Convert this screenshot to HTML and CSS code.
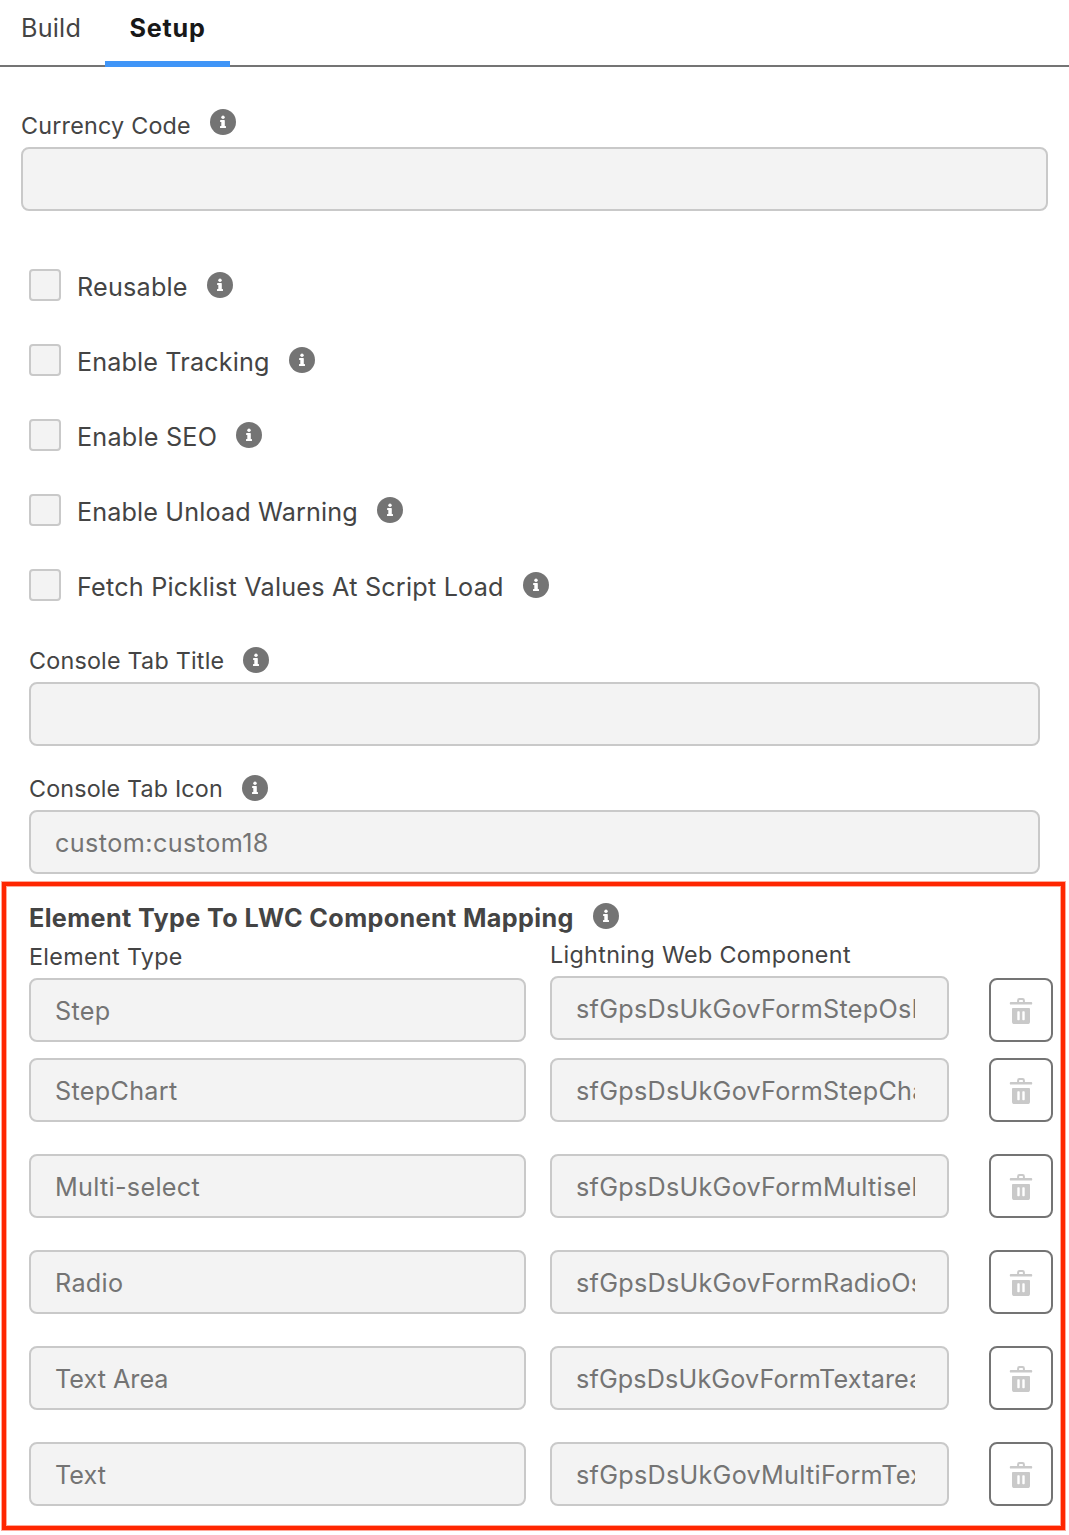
FILE: index.html
```html
<!DOCTYPE html>
<html lang="en">
<head>
<meta charset="utf-8">
<title>Setup</title>
<link rel="stylesheet" href="styles.css">
</head>
<body>
<svg class="sprite" aria-hidden="true">
  <symbol id="info" viewBox="0 0 26 26">
    <circle cx="13" cy="13" r="13" fill="#747474"/>
    <circle cx="13" cy="8.2" r="1.7" fill="#fff"/>
    <path fill="#fff" d="M10.7 11h3.5q.6 0 .6.6v5.400h.6q.6 0 .6.6v.8q0 .6-.6.6h-4.800q-.6 0-.6-.6v-.8q0-.6.6-.6h.7v-4h-.6q-.6 0-.6-.6v-.8q0-.6.6-.6z"/>
  </symbol>
  <symbol id="trash" viewBox="0 0 24 28">
    <path fill="#c9c9c9" fill-rule="evenodd" d="M1.8 5.1h6.3V3.4Q8.100 1 10.400 1h3.200q2.300 0 2.300 2.400v1.700h6.300q1 0 1 .9v.7q0 .9-1 .9H1.800q-1 0-1-.9V6q0-.9 1-.9zM10.100 5.100h3.800V3.600q0-.7-.7-.7h-2.400q-.7 0-.7.700zM3.900 11h16.200q.9 0 .9.9v12.500q0 2.600-2.500 2.600h-13Q3 27 3 24.400V11.900q0-.9.900-.9zM9 14.300q-.7 0-.7.7v7.600q0 .7.700.7h1q.7 0 .7-.7V15q0-.7-.7-.7zM14 14.300q-.7 0-.7.700v7.600q0 .7.700.7h1q.7 0 .7-.7V15q0-.7-.7-.7z"/>
  </symbol>
</svg>

<nav class="tabs">
  <a class="tab">Build</a>
  <a class="tab tab-active">Setup</a>
</nav>

<main>
  <div class="field field-wide">
    <label class="label">Currency Code <svg class="info"><use href="#info"/></svg></label>
    <div class="input"></div>
  </div>

  <div class="checks">
    <label class="check"><span class="box"></span><span>Reusable</span><svg class="info"><use href="#info"/></svg></label>
    <label class="check check-snug"><span class="box"></span><span>Enable Tracking</span><svg class="info"><use href="#info"/></svg></label>
    <label class="check"><span class="box"></span><span>Enable SEO</span><svg class="info"><use href="#info"/></svg></label>
    <label class="check check-snug"><span class="box"></span><span>Enable Unload Warning</span><svg class="info"><use href="#info"/></svg></label>
    <label class="check"><span class="box"></span><span>Fetch Picklist Values At Script Load</span><svg class="info"><use href="#info"/></svg></label>
  </div>

  <div class="field">
    <label class="label">Console Tab Title <svg class="info"><use href="#info"/></svg></label>
    <div class="input"></div>
  </div>
  <div class="field">
    <label class="label label-snug">Console Tab Icon <svg class="info"><use href="#info"/></svg></label>
    <div class="input"><span class="value value-icon">custom:custom18</span></div>
  </div>
</main>

<section class="mapping">
  <h2 class="heading">Element Type To LWC Component Mapping <svg class="info"><use href="#info"/></svg></h2>
  <div class="row row-first">
    <div><div class="label col-label">Element Type</div><div class="input"><span class="value">Step</span></div></div>
    <div class="raised"><div class="label col-label">Lightning Web Component</div><div class="input"><span class="value value-component">sfGpsDsUkGovFormStepOsN</span></div></div>
    <button class="delete"><svg class="trash"><use href="#trash"/></svg></button>
  </div>
  <div class="row">
    <div class="input"><span class="value">StepChart</span></div>
    <div class="input"><span class="value value-component">sfGpsDsUkGovFormStepChartOsN</span></div>
    <button class="delete"><svg class="trash"><use href="#trash"/></svg></button>
  </div>
  <div class="row">
    <div class="input"><span class="value">Multi-select</span></div>
    <div class="input"><span class="value value-component">sfGpsDsUkGovFormMultiselectOsN</span></div>
    <button class="delete"><svg class="trash"><use href="#trash"/></svg></button>
  </div>
  <div class="row">
    <div class="input"><span class="value">Radio</span></div>
    <div class="input"><span class="value value-component">sfGpsDsUkGovFormRadioOsN</span></div>
    <button class="delete"><svg class="trash"><use href="#trash"/></svg></button>
  </div>
  <div class="row">
    <div class="input"><span class="value value-tight">Text Area</span></div>
    <div class="input"><span class="value value-text">sfGpsDsUkGovFormTextareaOsN</span></div>
    <button class="delete"><svg class="trash"><use href="#trash"/></svg></button>
  </div>
  <div class="row">
    <div class="input"><span class="value value-tight">Text</span></div>
    <div class="input"><span class="value value-component">sfGpsDsUkGovMultiFormTextOsN</span></div>
    <button class="delete"><svg class="trash"><use href="#trash"/></svg></button>
  </div>
</section>
</body>
</html>
```
FILE: styles.css
```css
* { box-sizing: border-box; }
body {
  margin: 0;
  width: 1069px;
  height: 1535px;
  overflow: hidden;
  background: #fff;
  color: #444;
  font: 25.2px/30px Inter, "Liberation Sans", sans-serif;
  letter-spacing: 0.21px;
}
.sprite { display: none; }
.tabs {
  display: flex;
  height: 67px;
  border-bottom: 2px solid #747474;
}
.tab { width: 105px; height: 67px; padding: 13px 0 0 21px; }
.tab-active {
  width: 125px;
  padding-left: 24.5px;
  border-bottom: 6px solid #4095f7;
  color: #181818;
  font-weight: 700;
  letter-spacing: 0.8px;
}
.info { flex: none; width: 26px; height: 26px; margin-left: 19px; }
.field { margin: 0 29px; height: 128px; }
.field-wide { margin: 0 21px; padding-top: 42px; height: 187px; }
.label {
  display: flex;
  align-items: flex-start;
  height: 38px;
  padding-top: 3px;
  font-size: 23.3px;
  letter-spacing: 0.22px;
  line-height: 28px;
}
.label-snug { letter-spacing: 0.16px; }
.field-wide .label { padding-top: 0; line-height: 34px; }
.input {
  height: 64px;
  padding: 0 32px 0 24px;
  border: 2px solid #c9c9c9;
  border-radius: 8px;
  background: #f3f3f3;
  color: #747474;
}
.value {
  display: block;
  overflow: hidden;
  line-height: 62px;
  white-space: nowrap;
  letter-spacing: 0.3px;
}
.value-icon { letter-spacing: 0.42px; }
.value-tight { letter-spacing: 0; }
.value-component { letter-spacing: 0.27px; }
.value-text { letter-spacing: 0.13px; }
.checks { padding: 15px 0 0 29px; height: 390px; }
.check { display: flex; height: 75px; }
.check-snug { letter-spacing: 0.13px; }
.check span { line-height: 36px; }
.box {
  width: 32px;
  height: 32px;
  margin-right: 16px;
  border: 2px solid #c9c9c9;
  border-radius: 4px;
  background: #f3f3f3;
}
.check .info { margin-top: 3px; }
main { height: 815px; }
.mapping {
  width: 1063px;
  height: 648px;
  margin-left: 2px;
  padding: 17px 0 0 23px;
  border: 4px solid #ff2600;
  box-shadow: 0 0 0 1px rgba(255, 38, 0, 0.4), inset 0 0 0 1px rgba(255, 38, 0, 0.4);
}
.heading {
  display: flex;
  margin: 0;
  height: 35px;
  line-height: 30px;
  font-size: 25.2px;
  font-weight: 700;
  letter-spacing: 0.37px;
}
.row {
  display: grid;
  grid-template-columns: 497px 399px 64px;
  column-gap: 24px;
  align-items: end;
  margin-bottom: 32px;
}
.row-first { margin-bottom: 16px; }
.col-label { letter-spacing: 0.34px; }
.delete {
  display: flex;
  align-items: center;
  justify-content: center;
  width: 64px;
  height: 64px;
  margin-left: 16px;
  padding: 2px 0 0;
  border: 2px solid #747474;
  border-radius: 8px;
  background: #fff;
}
.trash { width: 24px; height: 28px; }
.raised { margin-bottom: 2px; }
```
